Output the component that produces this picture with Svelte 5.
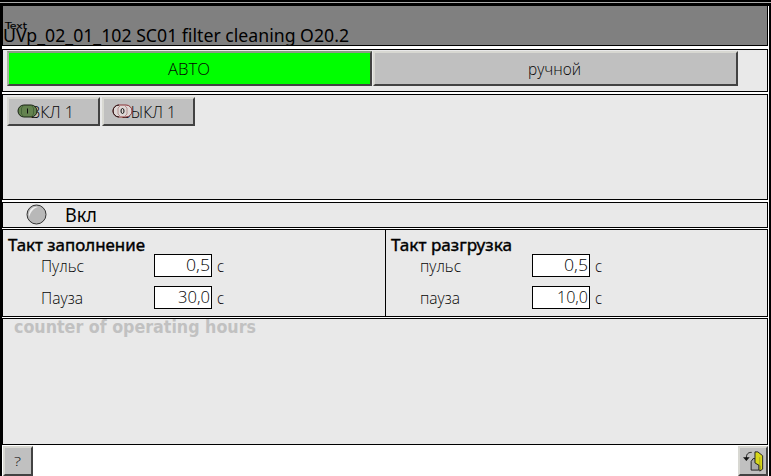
<script>
  const cycles = [
    { title: 'Такт заполнение', titleWidth: 137, first: 'Пульс', firstWidth: 43, second: 'Пауза', secondWidth: 42, a: '0,5', aw: 24, b: '30,0', bw: 32 },
    { title: 'Такт разгрузка', titleWidth: 121, first: 'пульс', firstWidth: 41, second: 'пауза', secondWidth: 40, a: '0,5', aw: 24, b: '10,0', bw: 31 }
  ];
</script>

{#snippet label(text, width, size, kind)}
  <svg class="label {kind}" {width} height="16" aria-label={text}>
    <text x="0" y="14" font-size={size} textLength={width} lengthAdjust="spacingAndGlyphs">{text}</text>
  </svg>
{/snippet}

{#snippet field(name, nameWidth, value, valueWidth)}
  <div class="field">
    <div class="name">{@render label(name, nameWidth, 15.5, 'thin')}</div>
    <div class="value">{@render label(value, valueWidth, 17, 'thin')}</div>
    {@render label('с', 7, 15.5, 'thin')}
  </div>
{/snippet}

<main>
  <div class="topline"></div>
  <header>
    <div class="tag">{@render label('Text', 22, 9.5, 'bold')}</div>
    <div class="title">{@render label('UVp_02_01_102 SC01 filter cleaning O20.2', 346, 17.5, 'regular')}</div>
  </header>

  <section class="modes">
    <button class="mode auto">{@render label('АВТО', 42, 17, 'thin')}</button>
    <button class="mode manual">{@render label('ручной', 53, 17, 'thin')}</button>
  </section>

  <section class="commands">
    <button class="cmd on">
      {@render label('ВКЛ 1', 44, 17, 'thin')}
      <svg class="oval" width="21" height="14" viewBox="0 0 21 14">
        <rect x="1" y="1" width="19" height="12" rx="6" fill="#64834f" stroke="#182313" />
        <path d="M6.5 1.500 4.500 4v6l2 2.500M14.500 1.500l2 2.500v6l-2 2.500" fill="none" stroke="#3f5d35" stroke-width=".8" />
        <path d="M10.5 4.5v5" stroke="#111" />
      </svg>
    </button>
    <button class="cmd off">
      {@render label('ВЫКЛ 1', 55, 17, 'thin')}
      <svg class="oval" width="21" height="14" viewBox="0 0 21 14">
        <rect x="1" y="1" width="19" height="12" rx="6" fill="#ded7d5" stroke="#8c3438" />
        <path d="M7 1a6 6 0 0 0 0 12" fill="none" stroke="#251515" />
        <path d="M8 2 6 4v6l2 2M13 2l2 2v6l-2 2" fill="none" stroke="#a87c7c" stroke-width=".8" />
        <ellipse cx="10.5" cy="7" rx="1.5" ry="2.5" fill="none" stroke="#111" />
      </svg>
    </button>
  </section>

  <section class="status">
    <svg width="21" height="21" viewBox="0 0 21 21">
      <circle cx="10.5" cy="10.5" r="9.5" fill="#b8b8b8" stroke="#333" />
      <path d="M3 13C2 7 6 2 12 3c-4 1-7 4-9 10Z" fill="#eee" />
    </svg>
    {@render label('Вкл', 32, 20, 'regular')}
  </section>

  <section class="cycles">
    {#each cycles as c}
      <div class="cycle">
        <div class="heading">{@render label(c.title, c.titleWidth, 17, 'strong')}</div>
        {@render field(c.first, c.firstWidth, c.a, c.aw)}
        {@render field(c.second, c.secondWidth, c.b, c.bw)}
      </div>
    {/each}
  </section>

  <section class="hours">{@render label('counter of operating hours', 242, 17, 'heavy')}</section>

  <footer>
    <button class="small">{@render label('?', 7, 13, 'thin')}</button>
    <button class="small" aria-label="Exit">
      <svg width="24" height="24" viewBox="0 0 24 24">
        <path d="M12.500 9.500h-2l-2 3v9h8v-5Z" fill="#aaa" stroke="#222" />
        <path d="M12.500 2.500h3l5 4v14l-3 2V17l-5-3Z" fill="#d7d719" stroke="#222" />
        <path d="M17.500 21V8" fill="none" stroke="#a5a51a" />
        <path d="M9 3C5 3 3.500 5 3.500 9" fill="none" stroke="#111" />
        <path d="M0 8h7l-3.500 4Z" fill="#111" />
      </svg>
    </button>
  </footer>
</main>

<style>
  :global(body) { background: #000; overflow: hidden; }
  * { box-sizing: border-box; }
  main { width: 769px; height: 476px; padding: 2px 1px 0 2px; background: linear-gradient(#000 0 6px, #fff 6px); display: flex; flex-direction: column; position: relative; box-shadow: inset 2px 0 #000; }
  .topline { height: 1px; flex: none; background: #aaa; margin: 0 -3px 2px -2px; }
  header { height: 41px; flex: none; background: #808080; border: 1px solid #000; position: relative; }
  section { flex: none; background: #e9e9e9; border: 1px solid #000; }
  .label { display: block; flex: none; overflow: visible; }
  text { font-family: "DejaVu Sans", sans-serif; fill: #000; }
  .thin text { font-family: "Open Sans", "Noto Sans", sans-serif; font-weight: 300; fill: #050505; }
  .regular text { font-family: "Noto Sans", sans-serif; font-weight: 400; }
  .strong text { font-family: "Noto Sans", sans-serif; font-weight: 400; stroke: #000; stroke-width: .4; }
  .bold text { font-weight: 400; stroke: #000; stroke-width: .2; }
  .heavy text { font-family: "DejaVu Sans Condensed", "DejaVu Sans", sans-serif; font-weight: 700; fill: #c1c1c1; }
  .tag { position: absolute; left: 2px; top: 9px; }
  .title { padding: 22px 0 0 0; }
  button { position: relative; margin: 0; padding: 0; background: #c0c0c0; border: 2px solid; border-color: #d8d8d2 #424242 #424242 #d8d8d2; border-radius: 0; display: flex; flex: none; }
  .modes { height: 43px; margin-top: 3px; display: flex; gap: 1px; padding: 1px 0 0 4px; }
  .mode { width: 365px; height: 35px; padding-top: 8px; }
  .auto { background: #0f0; padding-left: 159px; border-top-color: #8c9b85; border-left-color: #a7b49e; }
  .manual { padding-left: 153px; }
  .commands { height: 106px; margin-top: 2px; display: flex; gap: 2px; padding: 2px 0 0 4px; }
  .cmd { width: 93px; height: 29px; padding-top: 5px; }
  .on { padding-left: 21px; }
  .off { padding-left: 17px; }
  .oval { position: absolute; left: 8px; top: 5px; }
  .status { height: 26px; margin-top: 2px; display: flex; align-items: flex-start; gap: 18px; padding: 1px 0 0 23px; }
  .status .label { margin-top: 4px; }
  .cycles { height: 88px; margin-top: 1px; display: grid; grid-template-columns: 383px 1fr; }
  .cycle { height: 86px; padding: 7px 0 0 5px; border-right: 1px solid #000; }
  .cycle:last-child { border-right: 0; }
  .heading { height: 17px; }
  .field { display: flex; height: 23px; margin: 0 0 9px 33px; }
  .cycle:last-child .field { margin-left: 29px; }
  .name { width: 113px; padding-top: 4px; }
  .cycle:last-child .name { width: 112px; }
  .value { width: 58px; height: 23px; padding: 2px 1px 0 0; border: 1px solid #000; background: #fff; display: flex; justify-content: flex-end; }
  .field > :global(svg) { margin: 4px 0 0 5px; }
  .hours { height: 127px; margin-top: 1px; padding: 0 0 0 11px; }
  footer { height: 31px; padding: 1px 0 0 1px; display: flex; justify-content: space-between; }
  .small { width: 30px; height: 30px; }
  .small .label { margin: 4px 0 0 9px; }
  .small svg:not(.label) { margin: 1px 0 0 3px; }
</style>
